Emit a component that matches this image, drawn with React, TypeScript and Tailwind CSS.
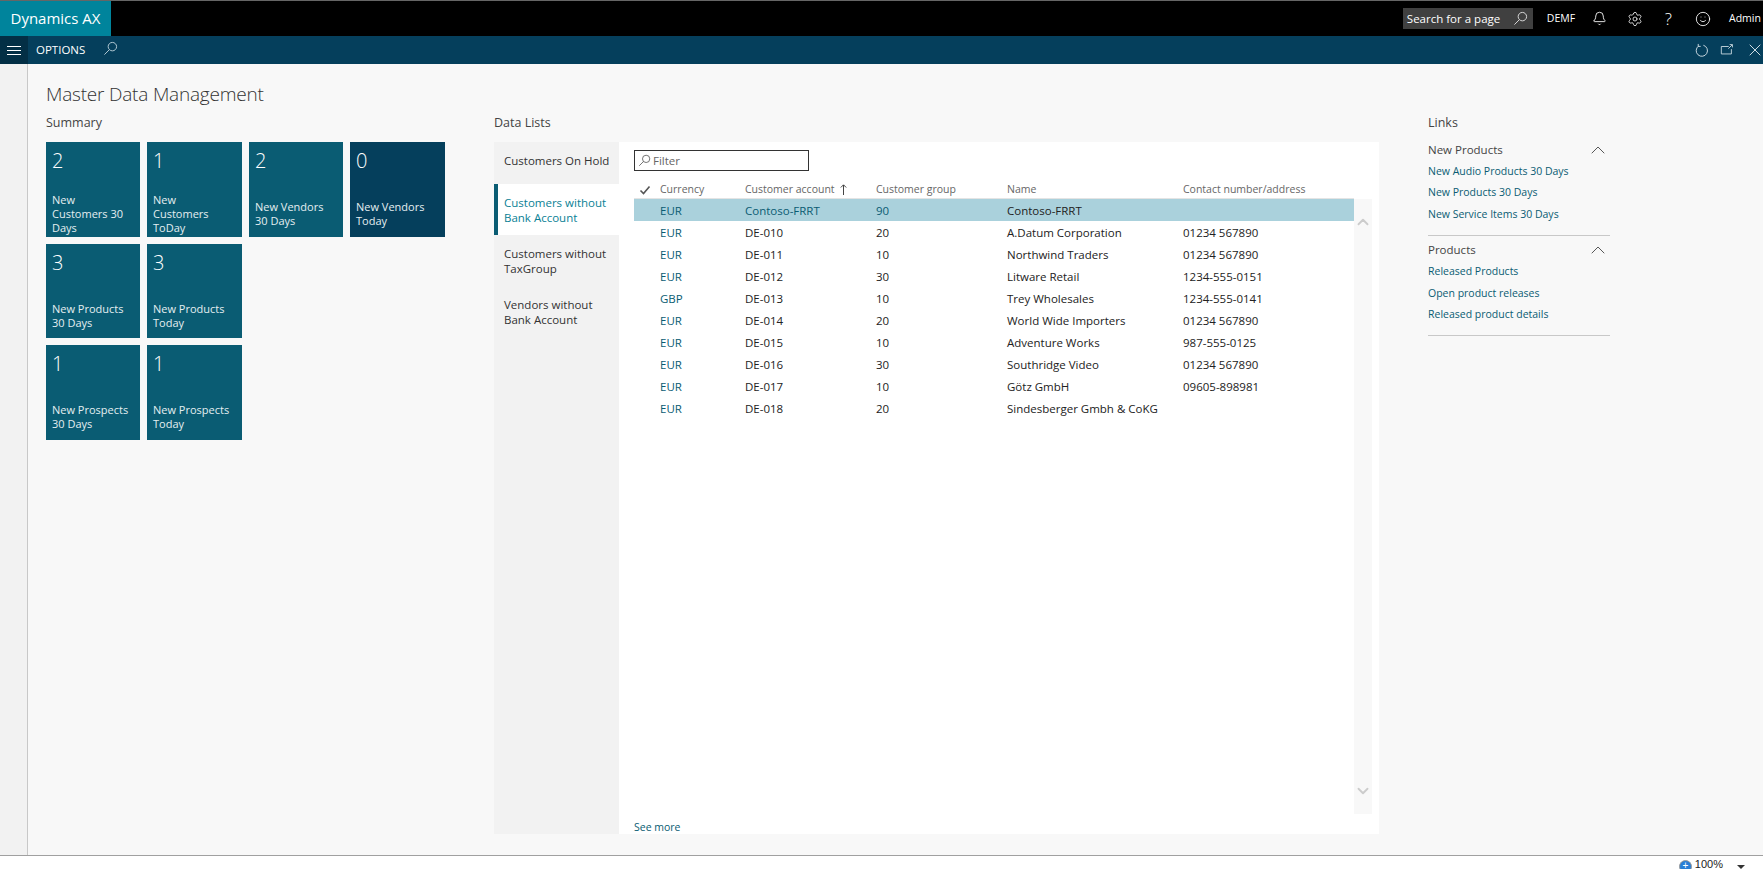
import { Bell, ChevronUp, Settings, Smile, X } from 'lucide-react';

const tiles = [
  [
    { count: '2', label: 'New Customers 30 Days', w: 'w-[94px]', h: 'h-[95px]' },
    { count: '1', label: 'New Customers ToDay', w: 'w-[95px]', h: 'h-[95px]' },
    { count: '2', label: 'New Vendors 30 Days', w: 'w-[94px]', h: 'h-[95px]' },
    { count: '0', label: 'New Vendors Today', w: 'w-[95px]', h: 'h-[95px]', dark: true },
  ],
  [
    { count: '3', label: 'New Products 30 Days', w: 'w-[94px]', h: 'h-[94px]' },
    { count: '3', label: 'New Products Today', w: 'w-[95px]', h: 'h-[94px]' },
  ],
  [
    { count: '1', label: 'New Prospects 30 Days', w: 'w-[94px]', h: 'h-[95px]' },
    { count: '1', label: 'New Prospects Today', w: 'w-[95px]', h: 'h-[95px]' },
  ],
];

const lists = [
  { label: 'Customers On Hold', h: 'h-[42px] pb-[5px]' },
  { label: 'Customers without Bank Account', h: 'h-[51px]', active: true },
  { label: 'Customers without TaxGroup', h: 'h-[51px]' },
  { label: 'Vendors without Bank Account', h: 'h-[51px]' },
];

const rows = [
  ['EUR', 'Contoso-FRRT', '90', 'Contoso-FRRT', ''],
  ['EUR', 'DE-010', '20', 'A.Datum Corporation', '01234 567890'],
  ['EUR', 'DE-011', '10', 'Northwind Traders', '01234 567890'],
  ['EUR', 'DE-012', '30', 'Litware Retail', '1234-555-0151'],
  ['GBP', 'DE-013', '10', 'Trey Wholesales', '1234-555-0141'],
  ['EUR', 'DE-014', '20', 'World Wide Importers', '01234 567890'],
  ['EUR', 'DE-015', '10', 'Adventure Works', '987-555-0125'],
  ['EUR', 'DE-016', '30', 'Southridge Video', '01234 567890'],
  ['EUR', 'DE-017', '10', 'Götz GmbH', '09605-898981'],
  ['EUR', 'DE-018', '20', 'Sindesberger Gmbh & CoKG', ''],
];

const linkGroups = [
  { title: 'New Products', h: 'h-[22px]', links: ['New Audio Products 30 Days', 'New Products 30 Days', 'New Service Items 30 Days'] },
  { title: 'Products', h: 'h-[23px]', links: ['Released Products', 'Open product releases', 'Released product details'] },
];

function SearchIcon({ size = 16, color = 'currentColor' }: { size?: number; color?: string }) {
  return (
    <svg width={size} height={size} viewBox="0 0 16 16" fill="none" stroke={color} strokeWidth="1">
      <circle cx="10" cy="6" r="4.5" />
      <path d="M6.8 9.2 1.5 14.5" />
    </svg>
  );
}

function Tile({ count, label, w, h, dark }: { count: string; label: string; w: string; h: string; dark?: boolean }) {
  return (
    <div className={`${w} ${h} pl-[6px] pr-[10px] text-white ${dark ? 'bg-[#053f5c]' : 'bg-[#0a5c73]'}`}>
      <div className="h-[50px] pt-px text-[20px] leading-[36px] font-light">{count}</div>
      <div className="h-[44px] flex items-center text-[11px] leading-[14px] text-[#e4eef1]">{label}</div>
    </div>
  );
}

export default function App() {
  return (
    <div className="h-screen w-full overflow-hidden flex flex-col bg-[#f8f8f8] text-[#222] font-['Open_Sans',sans-serif]">
      {/* top bar */}
      <div className="h-[36px] shrink-0 bg-black border-t border-[#666] flex items-center text-white">
        <div className="w-[111px] h-full bg-[#00849c] flex items-center justify-center text-[15px]">Dynamics AX</div>
        <div className="ml-auto flex items-center">
          <div className="w-[130px] h-[21px] bg-[#404040] flex items-center justify-between pl-1 pr-[5px] text-[11.5px]">
            <span>Search for a page</span>
            <SearchIcon size={15} color="#ddd" />
          </div>
          <span className="ml-[14px] w-[45px] text-[10.5px]">DEMF</span>
          <Bell size={15} strokeWidth={1.4} />
          <Settings size={16} strokeWidth={1.2} className="ml-[20px]" />
          <span className="ml-[22px] text-[17px] font-light leading-none">?</span>
          <Smile size={16} strokeWidth={1.3} className="ml-[23px]" />
          <span className="ml-[18px] w-[34px] text-[10.5px]">Admin</span>
        </div>
      </div>

      {/* options bar */}
      <div className="h-[28px] shrink-0 bg-[#053f5c] flex items-center text-white">
        <div className="w-[28px] h-full bg-[#032f45] flex flex-col items-center justify-center gap-[3px]">
          <span className="block w-[14px] h-px bg-white" />
          <span className="block w-[14px] h-px bg-white" />
          <span className="block w-[14px] h-px bg-white" />
        </div>
        <span className="ml-[8px] text-[11.5px]">OPTIONS</span>
        <span className="ml-[18px] -mt-1 text-[#b9ced8]">
          <SearchIcon size={15} />
        </span>
        <div className="ml-auto flex items-center gap-[11px] -mr-[2px] text-[#cfdde4]">
          <svg width="15" height="15" viewBox="0 0 16 16" fill="none" stroke="currentColor">
            <path d="M5 3.2A6 6 0 1 0 10 2.4" />
            <path d="M4.5 1v2.6h2.6" />
          </svg>
          <svg width="14" height="14" viewBox="0 0 16 16" fill="none" stroke="currentColor">
            <path d="M10 4H1.5v8.5H13V7" />
            <path d="M9.5 6.5 14 2M11 1.8h3.2V5" />
          </svg>
          <X size={20} strokeWidth={1.2} />
        </div>
      </div>

      <div className="flex-1 min-h-0 flex">
        <div className="w-[28px] shrink-0 bg-[#f2f2f2] border-r border-[#c8c8c8]" />
        <div className="flex-1 pl-[18px] pt-[18px]">
          <h1 className="text-[19px] leading-[24px] font-light tracking-[-0.2px] text-[#333]">Master Data Management</h1>
          <div className="flex mt-[7px]">
            {/* summary */}
            <div className="w-[448px]">
              <h2 className="pt-px text-[12.5px] leading-[18px] text-[#444]">Summary</h2>
              <div className="mt-[10px] flex flex-col gap-[7px]">
                {tiles.map((row, i) => (
                  <div key={i} className="flex gap-[7px]">
                    {row.map((t) => (
                      <Tile key={t.label} {...t} />
                    ))}
                  </div>
                ))}
              </div>
            </div>

            {/* data lists */}
            <div className="w-[885px]">
              <h2 className="pt-px text-[12.5px] leading-[18px] text-[#444]">Data Lists</h2>
              <div className="mt-[10px] h-[692px] flex bg-white">
                <div className="w-[125px] shrink-0 bg-[#f2f2f2]">
                  {lists.map((l) => (
                    <div
                      key={l.label}
                      className={`flex items-center ${l.h} pr-2 text-[11.5px] leading-[15px] ${
                        l.active ? 'bg-white border-l-4 border-[#0a5c73] pl-[6px] text-[#0a7f95]' : 'pl-[10px] text-[#333]'
                      }`}
                    >
                      {l.label}
                    </div>
                  ))}
                </div>
                <div className="flex-1 min-w-0 pt-2 pl-[15px] flex flex-col">
                  <div className="w-[175px] h-[21px] border border-[#333] flex items-center pl-[3px] gap-[2px] text-[11.5px] text-[#666]">
                    <SearchIcon size={13} color="#555" />
                    Filter
                  </div>
                  <div className="mt-[8px] h-[20px] pt-[2px] w-[720px] flex items-center text-[10.5px] text-[#666] border-b border-[#e4e4e4]">
                    <svg width="12" height="12" viewBox="0 0 12 12" fill="none" stroke="#555" strokeWidth="1.6" className="ml-[5px] mr-[9px] shrink-0">
                      <path d="m1.5 6.5 3 3 6-7" />
                    </svg>
                    <span className="w-[85px]">Currency</span>
                    <span className="w-[131px] flex items-center gap-[5px]">
                      Customer account
                      <svg width="7" height="11" viewBox="0 0 7 11" fill="none" stroke="#444">
                        <path d="M3.5 11V1M.8 3.5 3.5.8l2.7 2.7" />
                      </svg>
                    </span>
                    <span className="w-[131px]">Customer group</span>
                    <span className="w-[176px]">Name</span>
                    <span>Contact number/address</span>
                  </div>
                  <div className="flex flex-1 min-h-0">
                    <div className="w-[720px]">
                      {rows.map((r, i) => (
                        <div
                          key={r[1]}
                          className={`h-[22px] pt-[2px] flex items-center pl-[26px] text-[11.5px] ${i === 0 ? 'bg-[#aad1dc]' : ''}`}
                        >
                          <span className="w-[85px] text-[#0a5c73]">{r[0]}</span>
                          <span className={`w-[131px] ${i === 0 ? 'text-[#0a5c73]' : ''}`}>{r[1]}</span>
                          <span className={`w-[131px] ${i === 0 ? 'text-[#0a5c73]' : ''}`}>{r[2]}</span>
                          <span className="w-[176px] whitespace-nowrap">{r[3]}</span>
                          <span>{r[4]}</span>
                        </div>
                      ))}
                    </div>
                    <div className="w-[18px] h-[615px] bg-[#f8f8f8] flex flex-col justify-between items-center py-[14px] text-[#ccc]">
                      <ChevronUp size={18} strokeWidth={2.5} />
                      <ChevronUp size={18} strokeWidth={2.5} className="rotate-180" />
                    </div>
                  </div>
                  <div className="h-[14px] text-[10.5px] leading-[14px] text-[#0a5c73]">See more</div>
                </div>
              </div>
            </div>

            {/* links */}
            <div className="ml-[49px] w-[182px]">
              <h2 className="pt-px text-[12.5px] leading-[18px] text-[#444]">Links</h2>
              <div className="mt-[7px] flex flex-col gap-[3px]">
                {linkGroups.map((g) => (
                  <div key={g.title} className="pb-[9px] border-b border-[#c8c8c8]">
                    <div className={`${g.h} flex items-center justify-between text-[11.5px] text-[#444]`}>
                      {g.title}
                      <ChevronUp size={24} strokeWidth={0.9} />
                    </div>
                    {g.links.map((l) => (
                      <div key={l} className="h-[21.5px] flex items-center text-[10.5px] text-[#0a5c73]">
                        {l}
                      </div>
                    ))}
                  </div>
                ))}
              </div>
            </div>
          </div>
        </div>
      </div>

      {/* browser status bar */}
      <div className="h-[14px] shrink-0 bg-white border-t border-[#a0a0a0] flex items-start justify-end overflow-hidden pr-[18px] text-[#222] font-['Liberation_Sans',sans-serif]">
        <span className="mt-[4px] w-[13px] h-[13px] shrink-0 rounded-full bg-[#2a7fd6] border border-[#999] text-white text-[10px] leading-[10px] text-center">+</span>
        <span className="ml-[3px] mt-px text-[11px] leading-[15px]">100%</span>
        <span className="ml-[14px] mt-[9px] border-x-[4px] border-x-transparent border-t-[4px] border-t-[#333]" />
      </div>
    </div>
  );
}
